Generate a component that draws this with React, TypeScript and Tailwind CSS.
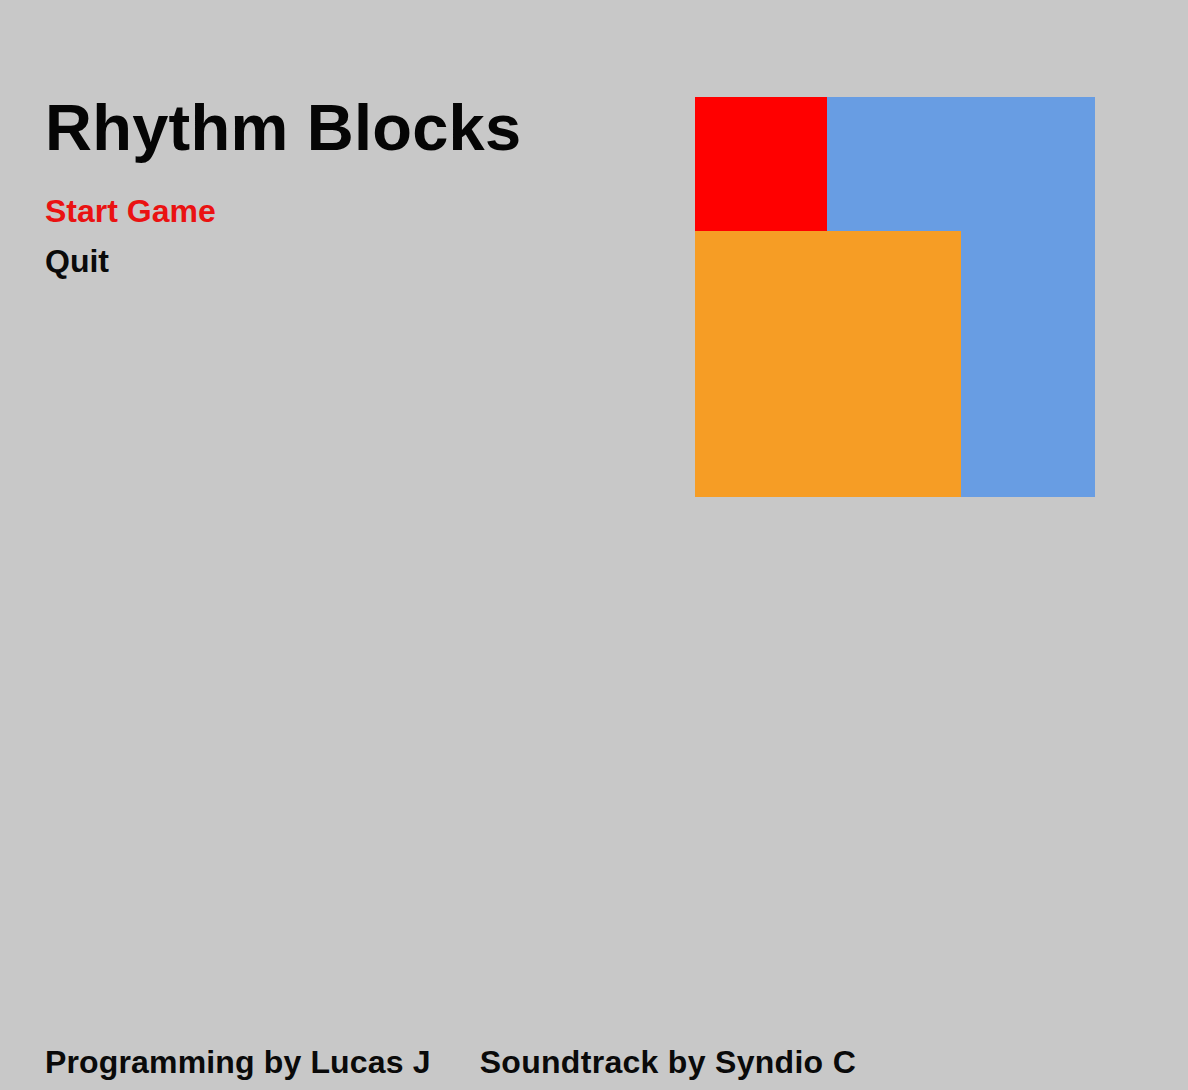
export default function App() {
  return (
    <div
      className="w-[1188px] h-[1090px] bg-[#c8c8c8] flex flex-col pl-[45px] pr-[93px] pb-[8px] text-black"
      style={{ fontFamily: '"Liberation Sans", Arial, sans-serif' }}
    >
      <div className="flex pt-[95px]">
        <div className="flex-1 flex flex-col">
          <h1 className="text-[65px] leading-[65px] font-bold tracking-[0.25px] text-[#050505]">Rhythm Blocks</h1>
          <div className="mt-[26px] flex flex-col">
            <span className="text-[32px] leading-[50px] font-bold text-[#ea1212]">Start Game</span>
            <span className="text-[32px] leading-[50px] font-bold text-[#0a0a0a]">Quit</span>
          </div>
        </div>
        <div className="mt-[2px] w-[400px] h-[400px] bg-[#689de3] flex flex-col">
          <div className="w-[132px] h-[134px] bg-[#ff0000]" />
          <div className="w-[266px] h-[266px] bg-[#f69d25]" />
        </div>
      </div>
      <div className="mt-auto flex text-[32px] leading-[40px] font-bold text-[#0a0a0a]">
        <span className="tracking-[0.15px]">Programming by Lucas J</span>
        <span className="ml-[49px] tracking-[0.3px]">Soundtrack by Syndio C</span>
      </div>
    </div>
  );
}
